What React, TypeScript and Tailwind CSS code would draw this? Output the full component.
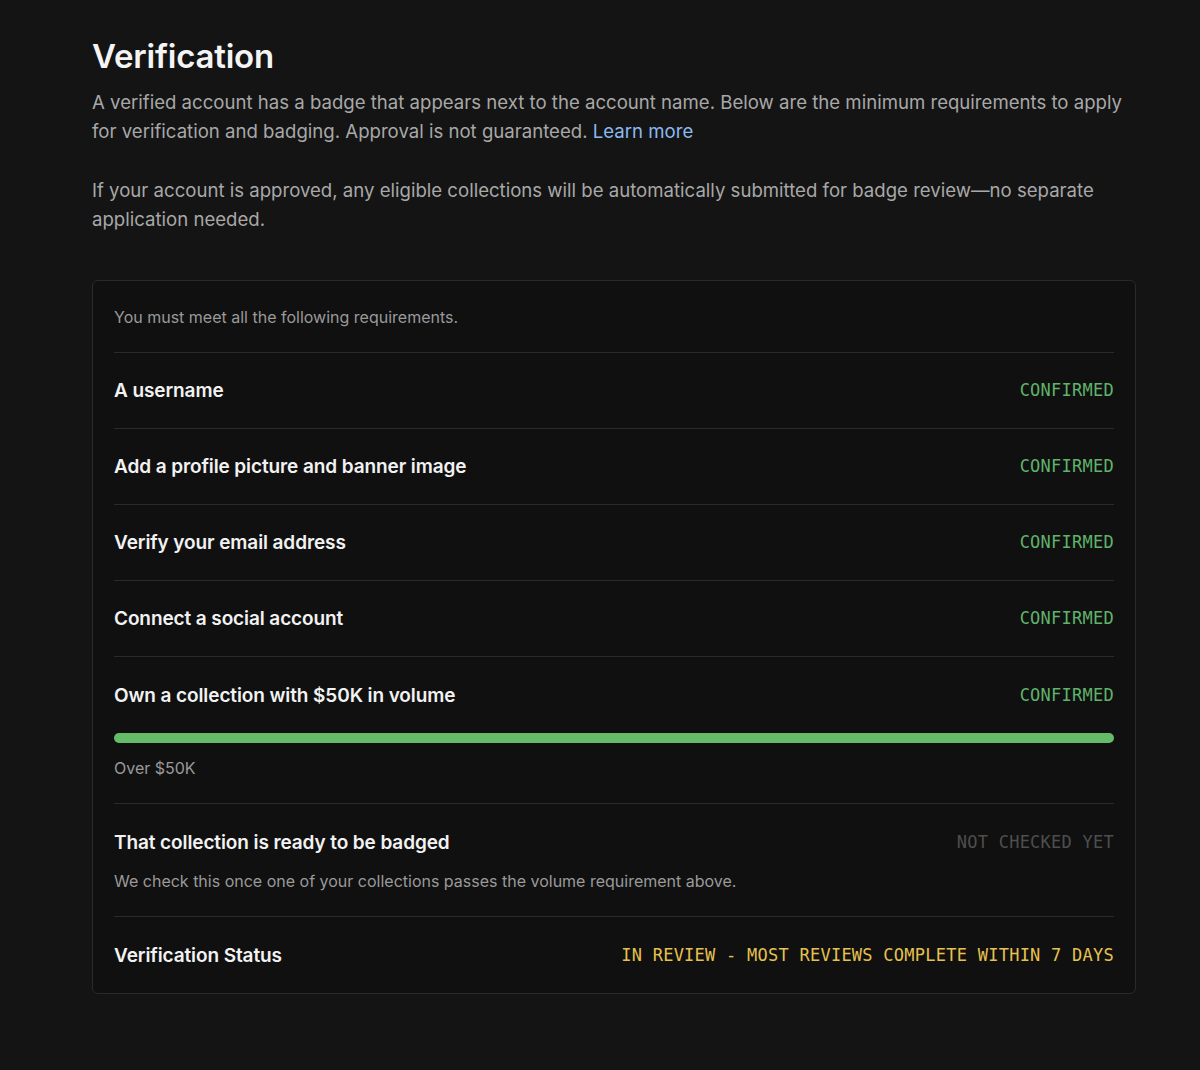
const ROWS: { label: string; status: string }[] = [
  { label: "A username", status: "CONFIRMED" },
  { label: "Add a profile picture and banner image", status: "CONFIRMED" },
  { label: "Verify your email address", status: "CONFIRMED" },
  { label: "Connect a social account", status: "CONFIRMED" },
];

const mono = "font-['DejaVu_Sans_Mono',monospace]";

function Row({ label, status, tone = "green" }: { label: string; status: string; tone?: "green" | "gray" | "yellow" }) {
  const color =
    tone === "green" ? "text-[#5fb36a]" : tone === "gray" ? "text-[#4e4e4e]" : "text-[#e6c14f]";
  return (
    <div className="flex items-center justify-between">
      <span className="text-[19px] font-semibold text-[#f2f2f2] leading-[27px] tracking-[-0.1px]">{label}</span>
      <span className={`${mono} text-[17px] tracking-[0.25px] ${color}`}>{status}</span>
    </div>
  );
}

export default function App() {
  return (
    <div className="min-h-[1070px] bg-[#141414] font-['Inter',sans-serif] text-[#a8a8a8]">
      <div className="ml-[92px] w-[1044px] pt-[34px]">
        <h1 className="text-[33px] font-semibold leading-[44px] text-[#f4f4f4] tracking-[-0.2px]">Verification</h1>
        <p className="mt-[10px] text-[18.6px] leading-[29px]">
          A verified account has a badge that appears next to the account name. Below are the minimum requirements to apply
          for verification and badging. Approval is not guaranteed.{" "}
          <a href="#" className="text-[#8cb9f0]">Learn more</a>
        </p>
        <p className="mt-[30px] text-[18.6px] leading-[29px]">
          If your account is approved, any eligible collections will be automatically submitted for badge review—no separate
          application needed.
        </p>

        <div className="mt-[46px] rounded-[6px] border border-[#2a2a2a] bg-[#101010] px-[21px]">
          <div className="pt-[25px] pb-[24px] text-[16px] leading-[22px] text-[#9a9a9a] border-b border-[#2a2a2a]">
            You must meet all the following requirements.
          </div>

          {ROWS.map((r) => (
            <div key={r.label} className="py-[24px] border-b border-[#2a2a2a]">
              <Row label={r.label} status={r.status} />
            </div>
          ))}

          <div className="pt-[25px] pb-[24px] border-b border-[#2a2a2a]">
            <Row label="Own a collection with $50K in volume" status="CONFIRMED" />
            <div className="mt-[24px] h-[10px] w-full rounded-full bg-[#65bc68]" />
            <div className="mt-[14px] text-[16px] leading-[22px] text-[#9a9a9a]">Over $50K</div>
          </div>

          <div className="pt-[25px] pb-[24px] border-b border-[#2a2a2a]">
            <Row label="That collection is ready to be badged" status="NOT CHECKED YET" tone="gray" />
            <div className="mt-[14px] text-[16px] leading-[22px] text-[#9a9a9a]">
              We check this once one of your collections passes the volume requirement above.
            </div>
          </div>

          <div className="pt-[25px] pb-[24px]">
            <Row label="Verification Status" status="IN REVIEW - MOST REVIEWS COMPLETE WITHIN 7 DAYS" tone="yellow" />
          </div>
        </div>
      </div>
    </div>
  );
}
